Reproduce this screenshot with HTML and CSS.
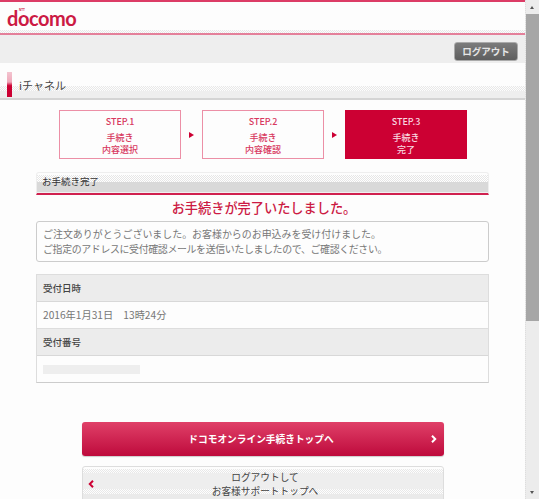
FILE: index.html
```html
<!DOCTYPE html>
<html lang="ja">
<head>
<meta charset="utf-8">
<title>お手続き完了</title>
<link rel="stylesheet" href="styles.css">
</head>
<body>
<div class="window">
  <div class="page">
    <header class="brand">
      <div class="logo"><span class="ntt">NTT</span>docomo</div>
    </header>
    <div class="toolbar"><a class="logout">ログアウト</a></div>
    <div class="channel"><span class="marker"></span><span class="channel-name">iチャネル</span></div>
    <ol class="steps">
      <li class="step"><span class="step-no">STEP.1</span><span class="step-text">手続き<br>内容選択</span></li>
      <li class="arrow"></li>
      <li class="step"><span class="step-no">STEP.2</span><span class="step-text">手続き<br>内容確認</span></li>
      <li class="arrow"></li>
      <li class="step current"><span class="step-no">STEP.3</span><span class="step-text">手続き<br>完了</span></li>
    </ol>
    <main class="content">
      <h2 class="section-title">お手続き完了</h2>
      <p class="done">お手続きが完了いたしました。</p>
      <div class="notice">ご注文ありがとうございました。お客様からのお申込みを受け付けました。<br><span class="tight">ご指定のアドレスに受付確認メールを送信いたしましたので、ご確認ください。</span></div>
      <dl class="info">
        <dt>受付日時</dt>
        <dd>2016年1月31日　13時24分</dd>
        <dt>受付番号</dt>
        <dd><span class="masked"></span></dd>
      </dl>
      <a class="btn primary">ドコモオンライン手続きトップへ<svg class="chev" viewBox="0 0 6 8"><path d="M1 .8 4.2 4 1 7.2" fill="none" stroke="#fff" stroke-width="2"/></svg></a>
      <a class="btn secondary"><svg class="chev" viewBox="0 0 6 8"><path d="M5 .8 1.8 4 5 7.2" fill="none" stroke="#cc0033" stroke-width="2"/></svg>ログアウトして<br>お客様サポートトップへ</a>
    </main>
  </div>
  <div class="scrollbar">
    <span class="sb-btn up"></span>
    <span class="thumb"></span>
    <span class="sb-btn down"></span>
  </div>
</div>
</body>
</html>
```
FILE: styles.css
```css
* { box-sizing: border-box; }
html, body { margin: 0; height: 100%; overflow: hidden; background: #fdfdfd; }
body { font-family: "Noto Sans CJK JP", "Liberation Sans", sans-serif; color: #333; }
.window { display: flex; width: 539px; height: 499px; }
.page { width: 525px; height: 499px; overflow: hidden; background: #fdfdfd; flex: none; }

.brand { height: 33px; border-top: 2px solid #dc3c66; padding: 9px 0 0 7px; background: linear-gradient(#fdfdfd 28px, transparent 28px), repeating-conic-gradient(#fdfdfd 0 25%, #e8e8e8 0 50%) 0 0 / 2px 2px; }
.logo { position: relative; font-family: "Lato", sans-serif; font-weight: 700; font-size: 20px; line-height: 15px; color: #cc1a44; letter-spacing: -.45px; width: 70px; }
.ntt { position: absolute; left: 12px; top: -2px; font: 700 3px/3px "Liberation Sans", sans-serif; letter-spacing: 0; }

.toolbar { height: 30px; border-top: 2px solid #e4809a; background: #eee; display: flex; justify-content: flex-end; align-items: flex-start; padding: 7px 7px 0 0; }
.logout { display: block; width: 64px; height: 19px; border-radius: 3px; background: linear-gradient(#7c7c7c, #5e5e5e); border: 1px solid #aaa; color: #e6e6e6; font-size: 9.5px; font-weight: 700; line-height: 16px; text-align: center; }

.channel { height: 37px; display: flex; align-items: flex-end; padding-left: 7px; background: linear-gradient(#fdfdfd 23px, transparent 23px, transparent 28px, #eee 28px, #eee 35px, #d4d4d4 35px), repeating-conic-gradient(#fdfdfd 0 25%, #e8e8e8 0 50%) 0 0 / 2px 2px; }
.marker { width: 5px; height: 25px; margin-bottom: 3px; background: linear-gradient(#f3c5d0, #f0a8ba 40%, #cc0033 55%); }
.channel-name { margin: 0 0 6px 7px; font-size: 11px; line-height: 17px; color: #444; }

.steps { list-style: none; margin: 10px 0 0 59px; padding: 0; display: flex; align-items: center; }
.step { width: 122px; height: 49px; border: 1px solid #ec8fa6; color: #d8385f; text-align: center; display: flex; flex-direction: column; font-size: 9px; font-weight: 500; }
.step-no { line-height: 10px; margin-top: 6px; }
.step-text { line-height: 12px; margin-top: 5px; }
.step.current { background: #cc0033; border-color: #cc0033; color: #f8d8e0; }
.arrow { width: 21px; flex: none; display: flex; justify-content: center; }
.arrow::before { content: ""; border-left: 5px solid #cc0033; border-top: 3px solid transparent; border-bottom: 3px solid transparent; }

.content { margin: 13px 0 0 36px; width: 453px; }
.section-title { margin: 0; height: 23px; border: 1px solid #eee; border-bottom: 2px solid #d0214f; border-radius: 3px 3px 0 0; background: linear-gradient(#fdfdfd 2px, transparent 2px, transparent 9px, #d9d9d9 9px, #d9d9d9 19px, #f0f0f0 19px), repeating-conic-gradient(#fff 0 25%, #e6e6e6 0 50%) 0 0 / 2px 2px; font-size: 9.5px; font-weight: 400; line-height: 17px; padding-left: 5px; color: #333; }
.done { margin: 3px 0 0; padding-left: 3px; font-size: 13.2px; font-weight: 500; line-height: 20px; color: #cc1a44; text-align: center; }
.notice { margin-top: 3px; height: 41px; border: 1px solid #ccc; border-radius: 3px; padding: 4px 6px; font-size: 9.95px; line-height: 15px; color: #777; white-space: nowrap; }
.tight { letter-spacing: -.37px; }
.info { margin: 12px 0 0; border: 1px solid #ddd; border-bottom-color: #ccc; }
.info dt { height: 27px; background: #ececec; border-bottom: 1px solid #d8d8d8; padding-left: 6px; font-size: 9.5px; font-weight: 500; line-height: 26px; color: #444; }
.info dd { margin: 0; height: 27px; padding-left: 6px; font-size: 10.2px; line-height: 26px; color: #777; border-bottom: 1px solid #ddd; }
.info dd:last-child { border-bottom: 0; height: 26px; padding-top: 9px; line-height: 0; }
.masked { display: block; width: 97px; height: 9px; background: #eee; }

.btn { display: flex; align-items: center; justify-content: center; position: relative; width: 362px; margin-left: 46px; border-radius: 3px; text-align: center; }
.primary { margin-top: 39px; height: 34px; padding-right: 4px; background: linear-gradient(#e04068, #be0a3c); color: #fff; font-size: 9.7px; font-weight: 700; box-shadow: 0 1px 1px #ccc; }
.secondary { display: block; margin-top: 10px; height: 44px; padding: 3px 0 0 4px; border: 1px solid #ddd; background: linear-gradient(#fdfdfd 2px, transparent 2px, transparent 6px, #eee 6px, #eee 22px, transparent 22px, transparent 27px, #eaeaea 27px), repeating-conic-gradient(#fdfdfd 0 25%, #e8e8e8 0 50%) 0 0 / 2px 2px; color: #444; font-size: 9.7px; line-height: 14px; }
.chev { position: absolute; width: 6px; height: 8px; }
.primary .chev { right: 7px; top: 13px; }
.secondary .chev { left: 5px; top: 13px; }

.scrollbar { width: 14px; height: 499px; background: #ececec; border-left: 1px dotted #ddd; display: flex; flex-direction: column; flex: none; }
.sb-btn { height: 14px; flex: none; position: relative; }
.sb-btn::before { content: ""; position: absolute; left: 4px; top: 6px; border-left: 2.5px solid transparent; border-right: 2.5px solid transparent; }
.up::before { border-bottom: 3px solid #555; }
.down::before { border-top: 3px solid #555; }
.thumb { height: 307px; background: #a6a6a6; }
.down { margin-top: auto; }
```
